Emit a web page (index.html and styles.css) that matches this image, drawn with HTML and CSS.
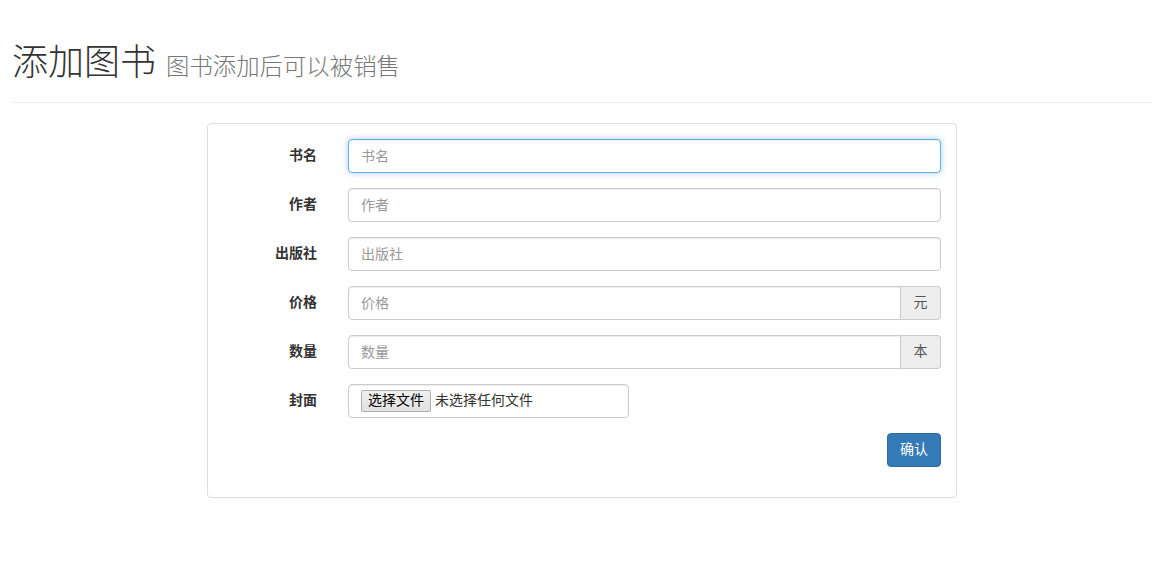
FILE: index.html
```html
<!DOCTYPE html>
<html lang="zh-CN">
<head>
<meta charset="utf-8">
<title>添加图书</title>
<link rel="stylesheet" href="styles.css">
</head>
<body>
<div class="page">
  <div class="page-header">
    <h1>添加图书 <small>图书添加后可以被销售</small></h1>
  </div>
  <form class="panel">
    <div class="row">
      <label class="label">书名</label>
      <div class="field"><input class="control is-focus" type="text" placeholder="书名"></div>
    </div>
    <div class="row">
      <label class="label">作者</label>
      <div class="field"><input class="control" type="text" placeholder="作者"></div>
    </div>
    <div class="row">
      <label class="label">出版社</label>
      <div class="field"><input class="control" type="text" placeholder="出版社"></div>
    </div>
    <div class="row">
      <label class="label">价格</label>
      <div class="field group">
        <input class="control control-grouped" type="text" placeholder="价格">
        <span class="addon">元</span>
      </div>
    </div>
    <div class="row">
      <label class="label">数量</label>
      <div class="field group">
        <input class="control control-grouped" type="text" placeholder="数量">
        <span class="addon">本</span>
      </div>
    </div>
    <div class="row">
      <label class="label">封面</label>
      <div class="field">
        <div class="file-box"><span class="file-btn">选择文件</span><span class="file-text">未选择任何文件</span></div>
      </div>
    </div>
    <div class="row">
      <span></span>
      <div class="field actions"><button class="btn" type="button">确认</button></div>
    </div>
  </form>
</div>
</body>
</html>
```
FILE: styles.css
```css
* { box-sizing: border-box; }
html, body { margin: 0; padding: 0; background: #fff; }
body {
  font-family: "Liberation Sans", "Noto Sans CJK SC", sans-serif;
  font-size: 14px;
  line-height: 1.42857;
  color: #333;
}
.page { padding: 0 21px 0 12px; }
.page-header {
  margin-top: 43px;
  padding-bottom: 9px;
  border-bottom: 1px solid #eee;
}
.page-header h1 {
  margin: 0 0 10px;
  font-size: 36px;
  font-weight: 300;
  line-height: 1.1;
  color: #333;
}
.page-header small {
  font-size: 65%;
  font-weight: 300;
  color: #777;
}
.panel {
  width: 750px;
  margin: 20px 0 0 195px;
  padding: 15px 15px 30px;
  border: 1px solid #ddd;
  border-radius: 4px;
  display: flex;
  flex-direction: column;
  gap: 15px;
}
.row {
  display: grid;
  grid-template-columns: 94px 1fr;
  column-gap: 31px;
  align-items: center;
}
.label {
  text-align: right;
  font-weight: bold;
  color: #333;
}
.field { display: flex; }
.control {
  width: 100%;
  height: 34px;
  padding: 6px 12px;
  font: inherit;
  color: #555;
  background: #fff;
  border: 1px solid #ccc;
  border-radius: 4px;
  box-shadow: inset 0 1px 1px rgba(0,0,0,.075);
  outline: none;
}
.control::placeholder { color: #999; }
.control.is-focus {
  border-color: #66afe9;
  box-shadow: inset 0 1px 1px rgba(0,0,0,.075), 0 0 6px rgba(102,175,233,.6);
}
.control-grouped {
  flex: 1;
  border-top-right-radius: 0;
  border-bottom-right-radius: 0;
}
.addon {
  width: 40px;
  height: 34px;
  display: flex;
  align-items: center;
  justify-content: center;
  color: #555;
  background: #eee;
  border: 1px solid #ccc;
  border-left: 0;
  border-radius: 0 4px 4px 0;
}
.file-box {
  width: 281px;
  height: 34px;
  padding: 0 12px;
  display: flex;
  align-items: center;
  border: 1px solid #ccc;
  border-radius: 4px;
  box-shadow: inset 0 1px 1px rgba(0,0,0,.075);
  color: #333;
}
.file-btn {
  height: 22px;
  padding: 0 6px;
  display: flex;
  align-items: center;
  background: linear-gradient(#f0f0f0, #e1e1e1);
  border: 1px solid #adadad;
  border-radius: 2px;
  color: #000;
  font-size: 14px;
}
.file-text { margin-left: 4px; color: #333; }
.actions { justify-content: flex-end; }
.btn {
  height: 34px;
  padding: 6px 12px;
  font: inherit;
  color: #fff;
  background: #337ab7;
  border: 1px solid #2e6da4;
  border-radius: 4px;
}
```
